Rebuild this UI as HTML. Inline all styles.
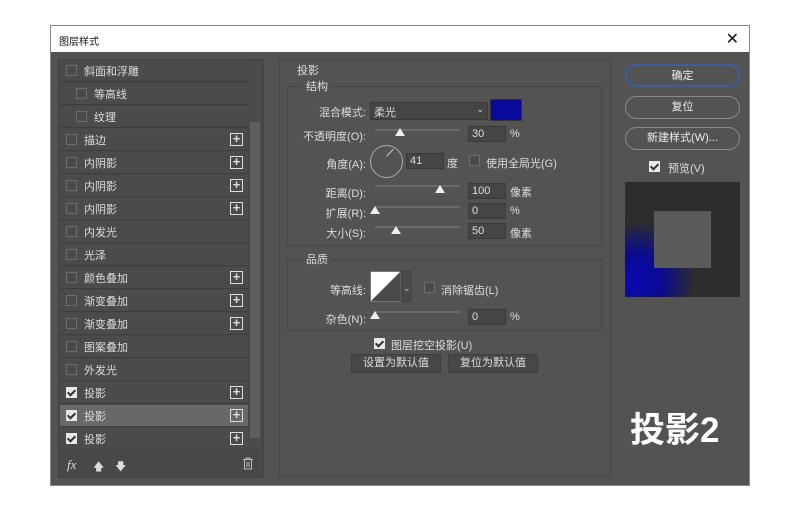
<!DOCTYPE html>
<html><head><meta charset="utf-8"><style>
*{box-sizing:border-box;margin:0;padding:0}
body{width:800px;height:520px;background:#fff;position:relative;overflow:hidden;font-family:"Liberation Sans","Noto Sans CJK SC",sans-serif;font-size:11px;color:#ddd}
.a{position:absolute}
.dlg{left:50px;top:25px;width:700px;height:461px;background:#535353;border:1px solid #888}
.title{left:50px;top:25px;width:700px;height:27px;background:#fff;color:#111;font-size:10px;padding:7px 0 0 8px;border:1px solid #888;border-bottom:none}
.row{left:60px;width:188px;height:22px;background:#4b4b4b;border-bottom:1px solid #3e3e3e}
.row span{position:absolute;left:24px;top:3px}
.cb{position:absolute;left:6px;top:5px;width:11px;height:11px;border:1px solid #6d6d6d;background:#4a4a4a}
.ck{background:#e8e8e8;border-color:#e8e8e8}
.ck:after{content:"";position:absolute;left:2px;top:0px;width:3px;height:6px;border:solid #333;border-width:0 2px 2px 0;transform:rotate(45deg)}
.plus{position:absolute;left:170px;top:4px;width:13px;height:13px;border:1px solid #ddd;color:#ddd;font-size:13px;line-height:10px;text-align:center;font-weight:bold}
.lbl{text-align:right;width:90px}
.fld{height:16px;background:#454545;border:1px solid #3a3a3a;padding:1px 3px;color:#ddd}
.sl{height:2px;background:#6a6a6a}
.th{width:0;height:0;border-left:5px solid transparent;border-right:5px solid transparent;border-bottom:8px solid #eee}
.btn{left:625px;width:115px;height:23px;border:1px solid #8a8a8a;border-radius:12px;text-align:center;line-height:21px;color:#eee}
</style></head><body>
<div class="a dlg"></div>
<div class="a title">图层样式<span style="position:absolute;right:10px;top:3px;font-size:16px">✕</span></div>
<div class="a" style="left:58px;top:59px;width:206px;height:419px;border:1px solid #424242;background:#484848"></div>
<div class="a" style="left:249px;top:62px;width:12px;height:386px;background:#4c4c4c"></div>
<div class="a" style="left:250px;top:122px;width:10px;height:316px;background:#5e5e5e"></div>
<div class="a row" style="top:60px"><div class="cb"></div><span>斜面和浮雕</span></div>
<div class="a row" style="top:83px"><div class="cb" style="left:16px"></div><span style="left:34px">等高线</span></div>
<div class="a row" style="top:106px"><div class="cb" style="left:16px"></div><span style="left:34px">纹理</span></div>
<div class="a row" style="top:129px"><div class="cb"></div><span>描边</span><div class="plus">+</div></div>
<div class="a row" style="top:152px"><div class="cb"></div><span>内阴影</span><div class="plus">+</div></div>
<div class="a row" style="top:175px"><div class="cb"></div><span>内阴影</span><div class="plus">+</div></div>
<div class="a row" style="top:198px"><div class="cb"></div><span>内阴影</span><div class="plus">+</div></div>
<div class="a row" style="top:221px"><div class="cb"></div><span>内发光</span></div>
<div class="a row" style="top:244px"><div class="cb"></div><span>光泽</span></div>
<div class="a row" style="top:267px"><div class="cb"></div><span>颜色叠加</span><div class="plus">+</div></div>
<div class="a row" style="top:290px"><div class="cb"></div><span>渐变叠加</span><div class="plus">+</div></div>
<div class="a row" style="top:313px"><div class="cb"></div><span>渐变叠加</span><div class="plus">+</div></div>
<div class="a row" style="top:336px"><div class="cb"></div><span>图案叠加</span></div>
<div class="a row" style="top:359px"><div class="cb"></div><span>外发光</span></div>
<div class="a row" style="top:382px"><div class="cb ck"></div><span>投影</span><div class="plus">+</div></div>
<div class="a row" style="top:405px;background:#686868"><div class="cb ck"></div><span>投影</span><div class="plus">+</div></div>
<div class="a row" style="top:428px"><div class="cb ck"></div><span>投影</span><div class="plus">+</div></div>
<div class="a" style="left:67px;top:457px;font-style:italic;font-family:'Liberation Serif',serif;font-size:13px">fx</div>
<div class="a" style="left:93px;top:458px;font-size:11px">🡅</div>
<div class="a" style="left:115px;top:458px;font-size:11px">🡇</div>
<svg class="a" style="left:242px;top:457px" width="12" height="13"><path d="M1 2.5H11M4 2.5V1H8V2.5M2.5 3V12H9.5V3M5 5V10M7 5V10" stroke="#bbb" fill="none"/></svg>
<div class="a" style="left:279px;top:60px;width:332px;height:416px;border:1px solid #464646"></div>
<div class="a" style="left:297px;top:62px">投影</div>
<div class="a" style="left:287px;top:86px;width:315px;height:160px;border:1px solid #464646"></div>
<div class="a" style="left:303px;top:78px;background:#535353;padding:0 3px">结构</div>
<div class="a lbl" style="left:276px;top:104px">混合模式:</div>
<div class="a fld" style="left:370px;top:102px;width:118px;height:18px">柔光<span style="position:absolute;right:3px;top:1px;font-size:9px">⌄</span></div>
<div class="a" style="left:490px;top:99px;width:32px;height:22px;background:#0a0a9a;border:1px solid #333"></div>
<div class="a lbl" style="left:276px;top:128px">不透明度(O):</div>
<div class="a sl" style="left:375px;top:129px;width:85px"></div><div class="a th" style="left:395px;top:128px"></div>
<div class="a fld" style="left:468px;top:126px;width:38px">30</div><div class="a" style="left:510px;top:128px">%</div>
<div class="a lbl" style="left:276px;top:156px">角度(A):</div>
<div class="a" style="left:370px;top:145px;width:33px;height:33px;border:1px solid #aaa;border-radius:50%"></div>
<div class="a" style="left:386px;top:156px;width:10px;height:1px;background:#ccc;transform:rotate(-45deg);transform-origin:0 0"></div>
<div class="a fld" style="left:406px;top:153px;width:38px">41</div><div class="a" style="left:447px;top:155px">度</div>
<div class="a cb" style="left:469px;top:155px;position:absolute"></div><div class="a" style="left:486px;top:155px">使用全局光(G)</div>
<div class="a lbl" style="left:276px;top:185px">距离(D):</div>
<div class="a sl" style="left:375px;top:185px;width:85px"></div><div class="a th" style="left:435px;top:185px"></div>
<div class="a fld" style="left:468px;top:183px;width:38px">100</div><div class="a" style="left:510px;top:184px">像素</div>
<div class="a lbl" style="left:276px;top:205px">扩展(R):</div>
<div class="a sl" style="left:375px;top:206px;width:85px"></div><div class="a th" style="left:370px;top:206px"></div>
<div class="a fld" style="left:468px;top:203px;width:38px">0</div><div class="a" style="left:510px;top:205px">%</div>
<div class="a lbl" style="left:276px;top:225px">大小(S):</div>
<div class="a sl" style="left:375px;top:226px;width:85px"></div><div class="a th" style="left:391px;top:226px"></div>
<div class="a fld" style="left:468px;top:223px;width:38px">50</div><div class="a" style="left:510px;top:225px">像素</div>
<div class="a" style="left:287px;top:259px;width:315px;height:72px;border:1px solid #464646"></div>
<div class="a" style="left:303px;top:251px;background:#535353;padding:0 3px">品质</div>
<div class="a lbl" style="left:276px;top:282px">等高线:</div>
<svg class="a" style="left:370px;top:271px" width="42" height="32"><rect x="0.5" y="0.5" width="30" height="30" fill="#4a4a4a" stroke="#777"/><polygon points="1,1 30,1 1,30" fill="#fff"/><rect x="31" y="0.5" width="10" height="30" fill="#4a4a4a" stroke="#444"/><text x="33" y="20" fill="#ccc" font-size="9">⌄</text></svg>
<div class="a cb" style="left:424px;top:282px;position:absolute"></div><div class="a" style="left:441px;top:282px">消除锯齿(L)</div>
<div class="a lbl" style="left:276px;top:311px">杂色(N):</div>
<div class="a sl" style="left:375px;top:311px;width:85px"></div><div class="a th" style="left:370px;top:311px"></div>
<div class="a fld" style="left:468px;top:309px;width:38px">0</div><div class="a" style="left:510px;top:311px">%</div>
<div class="a cb ck" style="left:374px;top:338px;position:absolute"></div><div class="a" style="left:391px;top:337px">图层挖空投影(U)</div>
<div class="a" style="left:351px;top:354px;width:90px;height:19px;background:#484848;border:1px solid #3e3e3e;text-align:center;line-height:17px">设置为默认值</div>
<div class="a" style="left:448px;top:354px;width:90px;height:19px;background:#484848;border:1px solid #3e3e3e;text-align:center;line-height:17px">复位为默认值</div>
<div class="a btn" style="top:64px;border:2px solid #3a5f9e">确定</div>
<div class="a btn" style="top:96px">复位</div>
<div class="a btn" style="top:127px">新建样式(W)...</div>
<div class="a cb ck" style="left:649px;top:161px;position:absolute"></div><div class="a" style="left:668px;top:160px">预览(V)</div>
<div class="a" style="left:625px;top:182px;width:115px;height:115px;background:#2d2d2d;overflow:hidden">
<div class="a" style="left:-20px;top:40px;width:100px;height:100px;background:radial-gradient(circle at 30% 60%,#0a0ab0 0%,#0a0a90 30%,rgba(20,20,80,0) 65%)"></div>
<div class="a" style="left:29px;top:29px;width:57px;height:57px;background:#5a5a5a"></div></div>
<div class="a" style="left:630px;top:402px;font-size:35px;font-weight:bold;color:#fff">投影2</div>
</body></html>
